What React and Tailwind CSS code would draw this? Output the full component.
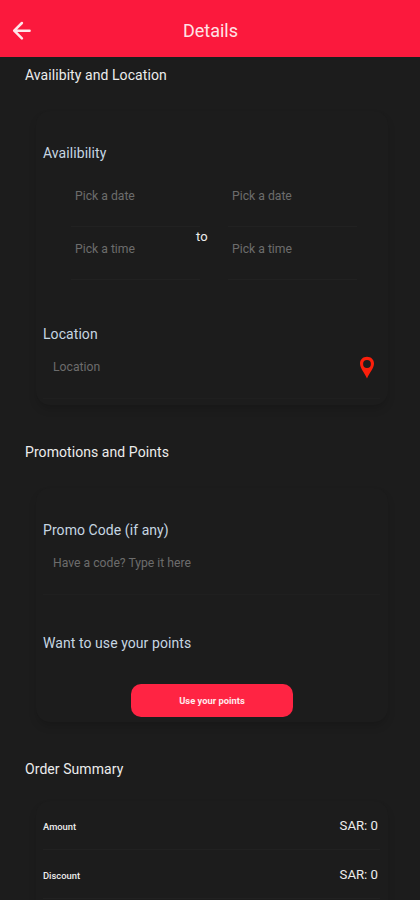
import { useState } from "react";

export default function App() {
  const [form, setForm] = useState({
    startDate: "",
    startTime: "",
    endDate: "",
    endTime: "",
    location: "",
    promo: "",
  });

  const bind = (name) => ({
    value: form[name],
    onChange: (e) => setForm({ ...form, [name]: e.target.value }),
  });

  return (
    <div className="h-[900px] w-[420px] overflow-hidden bg-[#1c1c1c] font-['Roboto',sans-serif] text-[#ececec]">
      <header className="grid h-[57px] grid-cols-[1fr_auto_1fr] items-center bg-[#fb193d] pt-[5px] pl-3">
        <button type="button" aria-label="Back" className="w-5">
          <BackIcon />
        </button>
        <h1 className="pr-[11px] text-[18px] leading-6 text-[#ffe3e6]">Details</h1>
      </header>

      <main className="flex flex-col">
        <SectionTitle className="mt-2">Availibity and Location</SectionTitle>
        <Card className="mt-[26px] h-[294px] pt-8">
          <Label>Availibility</Label>
          <div className="mt-[10px] flex pl-7">
            <div className="w-[129px]">
              <DateField placeholder="Pick a date" {...bind("startDate")} />
              <DateField placeholder="Pick a time" {...bind("startTime")} />
            </div>
            <span className="mt-[54px] -ml-1 w-8 text-[13px] leading-5">to</span>
            <div className="w-[129px]">
              <DateField placeholder="Pick a date" {...bind("endDate")} />
              <DateField placeholder="Pick a time" {...bind("endTime")} />
            </div>
          </div>
          <Label className="mt-[44px]">Location</Label>
          <div className="mt-[6px] flex h-[49px] items-start border-b border-[#1f1f1f] pr-[5px] pl-[10px]">
            <TextField placeholder="Location" {...bind("location")} />
            <PinIcon />
          </div>
        </Card>

        <SectionTitle className="mt-[37px]">Promotions and Points</SectionTitle>
        <Card className="mt-[26px] h-[234px] pt-8">
          <Label>Promo Code (if any)</Label>
          <div className="mt-[6px] flex h-[49px] items-start border-b border-[#1f1f1f] px-[10px]">
            <TextField placeholder="Have a code? Type it here" {...bind("promo")} />
          </div>
          <Label className="mt-[38px]">Want to use your points</Label>
          <button
            type="button"
            className="mt-[31px] ml-[88px] block h-[33px] w-[162px] rounded-[10px] bg-[#ff2443] pt-[2px] text-[9.4px] font-bold text-[#ffe9ec]"
          >
            Use your points
          </button>
        </Card>

        <SectionTitle className="mt-[37px]">Order Summary</SectionTitle>
        <Card className="mt-[22px] h-[150px]">
          <SummaryRow label="Amount" value="SAR: 0" />
          <SummaryRow label="Discount" value="SAR: 0" />
        </Card>
      </main>
    </div>
  );
}

function SectionTitle({ className = "", children }) {
  return (
    <h2 className={`pl-[25px] text-[14px] leading-5 tracking-[0.07px] ${className}`}>{children}</h2>
  );
}

function Card({ className = "", children }) {
  return (
    <section
      className={`ml-9 w-[352px] rounded-[14px] bg-[#1c1c1c] pr-2 pl-[7px] shadow-[0_5px_8px_-1px_rgba(0,0,0,0.16)] ${className}`}
    >
      {children}
    </section>
  );
}

function Label({ className = "", children }) {
  return (
    <h3 className={`text-[14px] leading-5 tracking-[0.07px] text-[#c6d6e2] ${className}`}>
      {children}
    </h3>
  );
}

function DateField(props) {
  return (
    <input
      className="block h-[53.5px] w-full border-b border-[#212121] bg-transparent pb-[7px] pl-1 text-[12.2px] text-[#6c6c6c] outline-none placeholder:text-[#6c6c6c]"
      {...props}
    />
  );
}

function TextField(props) {
  return (
    <input
      className="h-[34px] min-w-0 flex-1 bg-transparent text-[12.2px] text-[#6c6c6c] outline-none placeholder:text-[#6c6c6c]"
      {...props}
    />
  );
}

function SummaryRow({ label, value }) {
  return (
    <div className="flex h-[49px] items-center justify-between border-b border-[#212121] pt-[2px] pr-[2px]">
      <span className="pt-[3px] text-[9.4px] font-medium">{label}</span>
      <span className="text-[13.2px]">{value}</span>
    </div>
  );
}

function BackIcon() {
  return (
    <svg
      width="20"
      height="20"
      viewBox="0 0 20 20"
      fill="none"
      stroke="#ffe6e9"
      strokeWidth="2.5"
      strokeLinecap="round"
      strokeLinejoin="round"
    >
      <path d="M17.600 9.700H2.200M9.900 2L2.200 9.700l7.700 7.700" />
    </svg>
  );
}

function PinIcon() {
  return (
    <svg width="16" height="24" viewBox="0 0 16 24" className="mt-[6px]">
      <path
        fill="#fa1f0b"
        fillRule="evenodd"
        d="M8 .8C3.900.8 1 3.700 1 7.600 1 12.300 5.300 16.400 8 22.500c2.700-6.100 7-10.200 7-14.900C15 3.700 12.100.8 8 .8zm0 3.300a3.900 3.900 0 1 1 0 7.800 3.900 3.900 0 0 1 0-7.800z"
      />
    </svg>
  );
}
